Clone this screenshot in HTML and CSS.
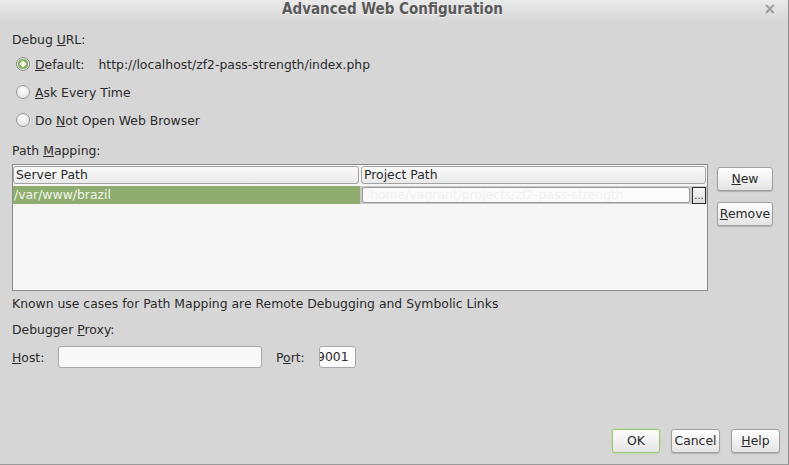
FILE: index.html
```html
<!DOCTYPE html>
<html>
<head>
<meta charset="utf-8">
<link rel="stylesheet" href="styles.css">
</head>
<body>
<div class="dialog">
  <div class="titlebar">
    <span class="title">Advanced Web Configuration</span>
    <span class="close">×</span>
  </div>
  <div class="content">
    <div class="label first">Debug <u>U</u>RL:</div>
    <div class="radio-row">
      <span class="radio checked"></span>
      <span class="rlabel"><u>D</u>efault:</span>
      <span class="url">http://localhost/zf2-pass-strength/index.php</span>
    </div>
    <div class="radio-row">
      <span class="radio"></span>
      <span class="rlabel"><u>A</u>sk Every Time</span>
    </div>
    <div class="radio-row">
      <span class="radio"></span>
      <span class="rlabel">Do <u>N</u>ot Open Web Browser</span>
    </div>
    <div class="label pm">Path <u>M</u>apping:</div>
    <div class="mapping">
      <div class="table">
        <div class="thead">
          <div class="th c1">Server Path</div>
          <div class="th c2">Project Path</div>
        </div>
        <div class="trow">
          <div class="td sel">/var/www/brazil</div>
          <div class="td edit">
            <div class="field">/home/vagrant/projects/zf2-pass-strength</div>
            <div class="dots">...</div>
          </div>
        </div>
      </div>
      <div class="side">
        <div class="btn side-btn"><u>N</u>ew</div>
        <div class="btn side-btn"><u>R</u>emove</div>
      </div>
    </div>
    <div class="label known">Known use cases for Path Mapping are Remote Debugging and Symbolic Links</div>
    <div class="label proxy">Debugger <u>P</u>roxy:</div>
    <div class="host-row">
      <span class="hlabel"><u>H</u>ost:</span>
      <div class="input host"></div>
      <span class="plabel">P<u>o</u>rt:</span>
      <div class="input port"><span>9001</span></div>
    </div>
  </div>
  <div class="footer">
    <div class="btn fbtn ok">OK</div>
    <div class="btn fbtn">Cancel</div>
    <div class="btn fbtn"><u>H</u>elp</div>
  </div>
</div>
</body>
</html>
```

FILE: styles.css
```css
html, body {
  margin: 0;
  padding: 0;
}
body {
  width: 789px;
  height: 465px;
  overflow: hidden;
  background: #d6d6d6;
  font-family: "DejaVu Sans", sans-serif;
  font-size: 12.4px;
  color: #2b2b2b;
}
u {
  text-decoration: underline;
  text-underline-offset: 1px;
}
.dialog {
  width: 788px;
  height: 464px;
  display: flex;
  flex-direction: column;
  border-right: 1px solid #8e8e8e;
  border-bottom: 1px solid #9a9a9a;
  background: #d6d6d6;
}
.titlebar {
  height: 22px;
  flex: none;
  display: flex;
  align-items: flex-start;
  justify-content: center;
  position: relative;
  background: linear-gradient(#eaeaea, #d7d7d7);
}
.title {
  font-family: "DejaVu Sans Condensed", "DejaVu Sans", sans-serif;
  font-weight: bold;
  font-size: 15px;
  line-height: 18px;
  color: #5a5a5a;
  text-shadow: 0 1px 0 #f4f4f4;
  margin-left: -3px;
}
.close {
  position: absolute;
  right: 12px;
  top: 1px;
  font-size: 15px;
  line-height: 16px;
  font-weight: bold;
  color: #9a9a9a;
}
.content {
  flex: 1;
  padding: 11px 15px 0 12px;
  display: flex;
  flex-direction: column;
}
.label {
  line-height: 14px;
  height: 14px;
}
.label.first + .radio-row {
  margin-top: 3px;
}
.radio-row {
  height: 28px;
  display: flex;
  align-items: center;
}
.radio {
  width: 12px;
  height: 12px;
  margin-left: 4px;
  margin-right: 5px;
  border-radius: 50%;
  border: 1px solid #9a9a9a;
  background: radial-gradient(circle at 50% 35%, #ffffff, #e6e6e6 70%);
  box-sizing: content-box;
}
.radio.checked {
  border-color: #8a8a8a;
  background: radial-gradient(circle, #f4f8ee 0 2.5px, #8db56a 3px 5px, #e9ecea 5.5px);
}
.url {
  margin-left: 14px;
}
.pm {
  margin-top: 10px;
}
.mapping {
  margin-top: 6px;
  display: flex;
  gap: 9px;
}
.table {
  width: 695px;
  height: 125px;
  border: 1px solid #8b8b8b;
  background: #f6f6f6;
}
.thead {
  display: flex;
  height: 20px;
  padding-top: 1px;
  box-sizing: border-box;
  gap: 2px;
}
.th {
  height: 18px;
  box-sizing: border-box;
  border: 1px solid #a3a3a3;
  border-radius: 3px;
  background: linear-gradient(#fbfbfb, #e9e9e9);
  line-height: 16px;
  padding-left: 2px;
  color: #2a2a2a;
}
.th.c1 { width: 346px; }
.th.c2 { width: 345px; }
.trow {
  display: flex;
  height: 18px;
  margin-top: 1px;
}
.td.sel {
  width: 347px;
  background: #8fad6f;
  color: #f2f7ec;
  line-height: 18px;
  padding-left: 1px;
  box-sizing: border-box;
}
.td.edit {
  flex: 1;
  display: flex;
  align-items: center;
  gap: 2px;
  padding-left: 2px;
  background: #c9c9c9;
}
.field {
  width: 328px;
  height: 16px;
  box-sizing: border-box;
  border: 1px solid #9a9a9a;
  border-radius: 3px;
  background: #fbfbfb;
  color: #f2f2f2;
  line-height: 14px;
  padding-left: 3px;
  overflow: hidden;
  white-space: nowrap;
}
.dots {
  width: 14px;
  height: 17px;
  box-sizing: border-box;
  border: 1px solid #2e2e2e;
  background: linear-gradient(#f6f6f6, #dedede);
  font-size: 10px;
  line-height: 16px;
  text-align: center;
  color: #333;
}
.side {
  display: flex;
  flex-direction: column;
  gap: 11px;
  padding-top: 3px;
}
.btn {
  box-sizing: border-box;
  border: 1px solid #a0a0a0;
  border-radius: 3px;
  background: linear-gradient(#fefefe, #e4e4e4);
  box-shadow: 0 1px 1px rgba(0,0,0,0.18);
  text-align: center;
  color: #2a2a2a;
}
.side-btn {
  width: 56px;
  height: 24px;
  line-height: 22px;
}
.known {
  margin-top: 6px;
}
.proxy {
  margin-top: 12px;
}
.host-row {
  margin-top: 9px;
  display: flex;
  align-items: center;
  height: 22px;
}
.hlabel {
  width: 46px;
}
.input {
  height: 22px;
  box-sizing: border-box;
  border: 1px solid #a8a8a8;
  border-radius: 3px;
  background: #f8f8f8;
}
.host {
  width: 204px;
}
.plabel {
  margin-left: 14px;
  width: 43px;
}
.port {
  width: 37px;
  overflow: hidden;
  white-space: nowrap;
  line-height: 20px;
  background: #fbfbfb;
}
.port span {
  display: inline-block;
  margin-left: -3px;
}
.footer {
  display: flex;
  justify-content: flex-end;
  gap: 11px;
  padding: 0 8px 11px 0;
}
.fbtn {
  width: 49px;
  height: 24px;
  line-height: 22px;
}
.ok {
  width: 48px;
  border-color: #9cc77a;
  box-shadow: 0 0 0 1px #c3dbae, 0 1px 1px rgba(0,0,0,0.15);
}
```
